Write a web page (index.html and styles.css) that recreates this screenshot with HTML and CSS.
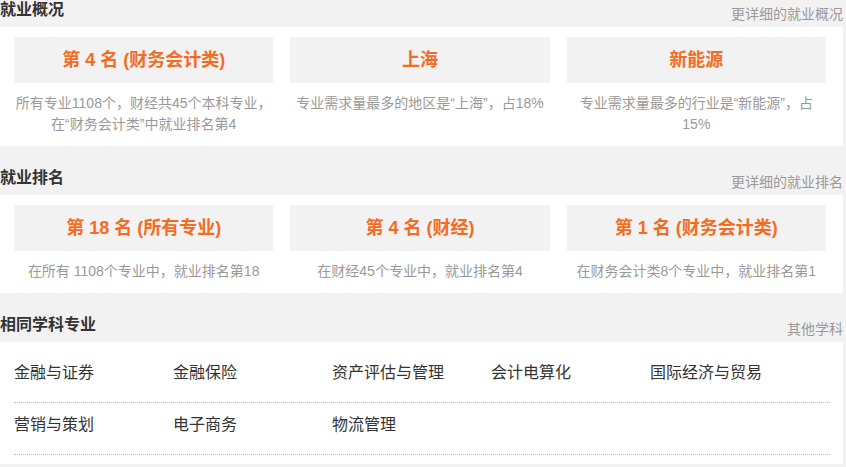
FILE: index.html
```html
<!DOCTYPE html>
<html lang="zh-CN">
<head>
<meta charset="utf-8">
<title>就业概况</title>
<link rel="stylesheet" href="styles.css">
</head>
<body>
<div class="page">
  <section class="section">
    <div class="sec-head">
      <h2 class="sec-title">就业概况</h2>
      <a class="sec-link" href="#">更详细的就业概况</a>
    </div>
    <div class="panel stats">
      <div class="stat">
        <div class="stat-box">第 4 名 (财务会计类)</div>
        <p class="stat-desc">所有专业1108个，财经共45个本科专业，在“财务会计类”中就业排名第4</p>
      </div>
      <div class="stat">
        <div class="stat-box">上海</div>
        <p class="stat-desc">专业需求量最多的地区是“上海”，占18%</p>
      </div>
      <div class="stat">
        <div class="stat-box">新能源</div>
        <p class="stat-desc">专业需求量最多的行业是“新能源”，占15%</p>
      </div>
    </div>
  </section>

  <section class="section">
    <div class="sec-head">
      <h2 class="sec-title">就业排名</h2>
      <a class="sec-link" href="#">更详细的就业排名</a>
    </div>
    <div class="panel stats">
      <div class="stat">
        <div class="stat-box">第 18 名 (所有专业)</div>
        <p class="stat-desc">在所有 1108个专业中，就业排名第18</p>
      </div>
      <div class="stat">
        <div class="stat-box">第 4 名 (财经)</div>
        <p class="stat-desc">在财经45个专业中，就业排名第4</p>
      </div>
      <div class="stat">
        <div class="stat-box">第 1 名 (财务会计类)</div>
        <p class="stat-desc">在财务会计类8个专业中，就业排名第1</p>
      </div>
    </div>
  </section>

  <section class="section">
    <div class="sec-head">
      <h2 class="sec-title">相同学科专业</h2>
      <a class="sec-link" href="#">其他学科</a>
    </div>
    <div class="panel majors">
      <ul class="major-row">
        <li><a href="#">金融与证券</a></li>
        <li><a href="#">金融保险</a></li>
        <li><a href="#">资产评估与管理</a></li>
        <li><a href="#">会计电算化</a></li>
        <li><a href="#">国际经济与贸易</a></li>
      </ul>
      <ul class="major-row">
        <li><a href="#">营销与策划</a></li>
        <li><a href="#">电子商务</a></li>
        <li><a href="#">物流管理</a></li>
      </ul>
    </div>
  </section>
</div>
</body>
</html>
```

FILE: styles.css
```css
* {
  box-sizing: border-box;
}

html, body {
  margin: 0;
  padding: 0;
  background: #f2f2f2;
}

body {
  font-family: "Liberation Sans", "Noto Sans CJK SC", sans-serif;
  color: #333;
}

a {
  text-decoration: none;
}

.page {
  width: 843px;
}

.section + .section {
  margin-top: 22px;
}

.sec-head {
  display: flex;
  justify-content: space-between;
  align-items: flex-start;
  height: 27px;
}

.sec-title {
  margin: 0;
  font-size: 16px;
  line-height: 20px;
  font-weight: bold;
  color: #333;
}

.sec-link {
  margin-top: 4px;
  font-size: 14px;
  line-height: 20px;
  color: #999;
}

.panel {
  background: #fff;
}

.stats {
  display: grid;
  grid-template-columns: repeat(3, 1fr);
  column-gap: 17px;
  padding: 10px 17px 11px 14px;
}

.stat-box {
  height: 46px;
  line-height: 46px;
  background: #f2f2f2;
  text-align: center;
  font-size: 18px;
  font-weight: bold;
  color: #f26c22;
}

.stat-desc {
  margin: 10px 0 0;
  font-size: 14px;
  line-height: 21px;
  color: #999;
  text-align: center;
}

.majors {
  padding: 9px 13px 9px 14px;
}

.major-row {
  display: flex;
  margin: 0;
  padding: 11px 0 18px;
  list-style: none;
  border-bottom: 1px dotted #bbb;
}

.major-row li {
  width: 159px;
  font-size: 16px;
  line-height: 22px;
}

.major-row a {
  color: #333;
}
```
